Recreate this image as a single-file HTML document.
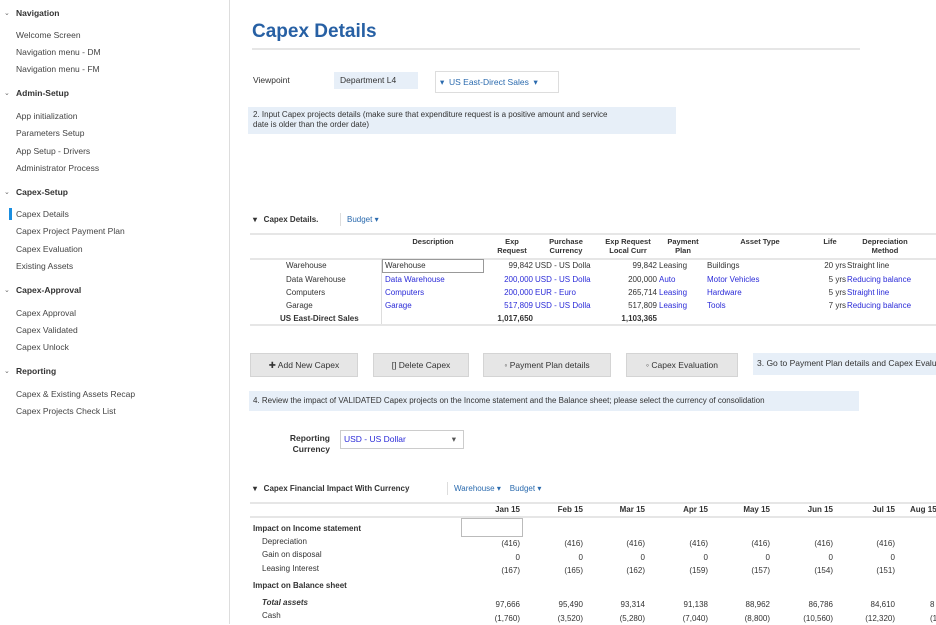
<!DOCTYPE html>
<html><head><style>
*{margin:0;padding:0;box-sizing:border-box}
body{width:936px;height:624px;overflow:hidden;background:#fff;font-family:"Liberation Sans",sans-serif;font-size:8px;color:#333;position:relative}
.a{position:absolute;white-space:nowrap}
.h{font-weight:bold;color:#333;font-size:8.5px}
.i{color:#444;font-size:8.5px}
.chev{position:absolute;left:4px;font-size:7px;color:#666}
.bl{color:#2b2bd8}
.r{text-align:right}
.btn{position:absolute;background:#e6e6e6;border:1px solid #d4d4d4;height:24px;font-size:8.5px;color:#333;display:flex;align-items:center;justify-content:center}
.box{position:absolute;background:#e7eff8}
.hr{position:absolute;height:2px;background:#e6e6e6}
</style></head><body>
<div style="position:absolute;left:229px;top:0;width:1px;height:624px;background:#ddd"></div>

<span class="chev" style="top:9px">⌄</span><div class="a h" style="left:16px;top:8px">Navigation</div>
<div class="a i" style="left:16px;top:30px">Welcome Screen</div>
<div class="a i" style="left:16px;top:47px">Navigation menu - DM</div>
<div class="a i" style="left:16px;top:64px">Navigation menu - FM</div>
<span class="chev" style="top:89px">⌄</span><div class="a h" style="left:16px;top:88px">Admin-Setup</div>
<div class="a i" style="left:16px;top:111px">App initialization</div>
<div class="a i" style="left:16px;top:128px">Parameters Setup</div>
<div class="a i" style="left:16px;top:146px">App Setup - Drivers</div>
<div class="a i" style="left:16px;top:163px">Administrator Process</div>
<span class="chev" style="top:188px">⌄</span><div class="a h" style="left:16px;top:187px">Capex-Setup</div>
<div style="position:absolute;left:9px;top:208px;width:3px;height:12px;background:#1a8ee0"></div>
<div class="a i" style="left:16px;top:209px">Capex Details</div>
<div class="a i" style="left:16px;top:226px">Capex Project Payment Plan</div>
<div class="a i" style="left:16px;top:244px">Capex Evaluation</div>
<div class="a i" style="left:16px;top:261px">Existing Assets</div>
<span class="chev" style="top:286px">⌄</span><div class="a h" style="left:16px;top:285px">Capex-Approval</div>
<div class="a i" style="left:16px;top:308px">Capex Approval</div>
<div class="a i" style="left:16px;top:325px">Capex Validated</div>
<div class="a i" style="left:16px;top:342px">Capex Unlock</div>
<span class="chev" style="top:367px">⌄</span><div class="a h" style="left:16px;top:366px">Reporting</div>
<div class="a i" style="left:16px;top:389px">Capex &amp; Existing Assets Recap</div>
<div class="a i" style="left:16px;top:406px">Capex Projects Check List</div>

<div class="a" style="left:252px;top:21px;font-size:19px;font-weight:bold;color:#2760a4">Capex Details</div>
<div class="hr" style="left:252px;top:48px;width:608px"></div>

<div class="a" style="left:253px;top:75px;font-size:8.5px">Viewpoint</div>
<div class="box" style="left:334px;top:72px;width:84px;height:17px;font-size:8.5px;padding:3px 6px">Department L4</div>
<div style="position:absolute;left:435px;top:71px;width:124px;height:22px;border:1px solid #ddd;font-size:8.5px;color:#2a6aae;padding:5px 4px">▾ &nbsp;US East-Direct Sales &nbsp;▾</div>
<div class="box" style="left:248px;top:107px;width:428px;height:27px;font-size:8px;padding:3px 5px;line-height:10px">2. Input Capex projects details (make sure that expenditure request is a positive amount and service<br>date is older than the order date)</div>

<div class="a" style="left:253px;top:215px;font-size:8px;font-weight:bold">▾ &nbsp; Capex Details.</div>
<div style="position:absolute;left:340px;top:213px;width:1px;height:13px;background:#ddd"></div>
<div class="a" style="left:347px;top:215px;color:#2a6aae">Budget ▾</div>
<div class="hr" style="left:250px;top:233px;width:686px"></div>
<div class="a" style="left:383px;top:237px;width:100px;text-align:center;font-weight:bold;font-size:7.5px">Description</div>
<div class="a r" style="left:492px;top:237px;width:40px;font-weight:bold;font-size:7.5px;text-align:center;line-height:9px">Exp<br>Request</div>
<div class="a" style="left:538px;top:237px;width:56px;font-weight:bold;font-size:7.5px;text-align:center;line-height:9px">Purchase<br>Currency</div>
<div class="a" style="left:598px;top:237px;width:60px;font-weight:bold;font-size:7.5px;text-align:center;line-height:9px">Exp Request<br>Local Curr</div>
<div class="a" style="left:660px;top:237px;width:46px;font-weight:bold;font-size:7.5px;text-align:center;line-height:9px">Payment<br>Plan</div>
<div class="a" style="left:720px;top:237px;width:80px;font-weight:bold;font-size:7.5px;text-align:center">Asset Type</div>
<div class="a" style="left:815px;top:237px;width:30px;font-weight:bold;font-size:7.5px;text-align:center">Life</div>
<div class="a" style="left:850px;top:237px;width:70px;font-weight:bold;font-size:7.5px;text-align:center;line-height:9px">Depreciation<br>Method</div>
<div class="hr" style="left:250px;top:258px;width:686px"></div>
<div style="position:absolute;left:381px;top:259px;width:1px;height:65px;background:#ddd"></div>
<div style="position:absolute;left:382px;top:259px;width:102px;height:14px;border:1px solid #999"></div>

<div class="a" style="left:286px;top:261px">Warehouse</div>
<div class="a" style="left:286px;top:275px">Data Warehouse</div>
<div class="a" style="left:286px;top:288px">Computers</div>
<div class="a" style="left:286px;top:301px">Garage</div>
<div class="a" style="left:280px;top:314px;font-weight:bold">US East-Direct Sales</div>
<div class="a" style="left:385px;top:261px">Warehouse</div>
<div class="a bl" style="left:385px;top:275px">Data Warehouse</div>
<div class="a bl" style="left:385px;top:288px">Computers</div>
<div class="a bl" style="left:385px;top:301px">Garage</div>
<div class="a r" style="left:480px;top:261px;width:53px">99,842</div>
<div class="a r bl" style="left:480px;top:275px;width:53px">200,000</div>
<div class="a r bl" style="left:480px;top:288px;width:53px">200,000</div>
<div class="a r bl" style="left:480px;top:301px;width:53px">517,809</div>
<div class="a r" style="left:480px;top:314px;width:53px;font-weight:bold">1,017,650</div>
<div class="a" style="left:535px;top:261px">USD - US Dolla</div>
<div class="a bl" style="left:535px;top:275px">USD - US Dolla</div>
<div class="a bl" style="left:535px;top:288px">EUR - Euro</div>
<div class="a bl" style="left:535px;top:301px">USD - US Dolla</div>
<div class="a r" style="left:600px;top:261px;width:57px">99,842</div>
<div class="a r" style="left:600px;top:275px;width:57px">200,000</div>
<div class="a r" style="left:600px;top:288px;width:57px">265,714</div>
<div class="a r" style="left:600px;top:301px;width:57px">517,809</div>
<div class="a r" style="left:600px;top:314px;width:57px;font-weight:bold">1,103,365</div>
<div class="a" style="left:659px;top:261px">Leasing</div>
<div class="a bl" style="left:659px;top:275px">Auto</div>
<div class="a bl" style="left:659px;top:288px">Leasing</div>
<div class="a bl" style="left:659px;top:301px">Leasing</div>
<div class="a" style="left:707px;top:261px">Buildings</div>
<div class="a bl" style="left:707px;top:275px">Motor Vehicles</div>
<div class="a bl" style="left:707px;top:288px">Hardware</div>
<div class="a bl" style="left:707px;top:301px">Tools</div>
<div class="a r" style="left:810px;top:261px;width:36px">20 yrs</div>
<div class="a r" style="left:810px;top:275px;width:36px">5 yrs</div>
<div class="a r" style="left:810px;top:288px;width:36px">5 yrs</div>
<div class="a r" style="left:810px;top:301px;width:36px">7 yrs</div>
<div class="a" style="left:847px;top:261px">Straight line</div>
<div class="a bl" style="left:847px;top:275px">Reducing balance</div>
<div class="a bl" style="left:847px;top:288px">Straight line</div>
<div class="a bl" style="left:847px;top:301px">Reducing balance</div>
<div class="hr" style="left:250px;top:324px;width:686px"></div>

<div class="btn" style="left:250px;top:353px;width:108px">✚ Add New Capex</div>
<div class="btn" style="left:373px;top:353px;width:96px">[] Delete Capex</div>
<div class="btn" style="left:483px;top:353px;width:128px">◦ Payment Plan details</div>
<div class="btn" style="left:626px;top:353px;width:112px">◦ Capex Evaluation</div>
<div class="box" style="left:753px;top:353px;width:183px;height:22px;font-size:8.5px;padding:5px 4px;overflow:hidden;white-space:nowrap">3. Go to Payment Plan details and Capex Evaluation</div>
<div class="box" style="left:249px;top:391px;width:610px;height:20px;font-size:8px;padding:5px 4px">4. Review the impact of VALIDATED Capex projects on the Income statement and the Balance sheet; please select the currency of consolidation</div>

<div class="a r" style="left:270px;top:433px;width:60px;font-weight:bold;font-size:8.5px;line-height:11px">Reporting<br>Currency</div>
<div style="position:absolute;left:340px;top:430px;width:124px;height:19px;border:1px solid #ccc;font-size:8.5px;color:#2b2bd8;padding:3px 3px">USD - US Dollar<span style="position:absolute;right:7px;color:#555">▾</span></div>

<div class="a" style="left:253px;top:484px;font-size:8px;font-weight:bold">▾ &nbsp; Capex Financial Impact With Currency</div>
<div style="position:absolute;left:447px;top:482px;width:1px;height:13px;background:#ddd"></div>
<div class="a" style="left:454px;top:484px;color:#2a6aae">Warehouse ▾ &nbsp;&nbsp; Budget ▾</div>
<div class="hr" style="left:250px;top:502px;width:686px"></div>
<div class="hr" style="left:250px;top:516px;width:686px"></div>
<div style="position:absolute;left:461px;top:518px;width:62px;height:19px;border:1px solid #bbb"></div>
<div class="a" style="left:253px;top:524px;font-weight:bold">Impact on Income statement</div>
<div class="a" style="left:262px;top:537px">Depreciation</div>
<div class="a" style="left:262px;top:550px">Gain on disposal</div>
<div class="a" style="left:262px;top:564px">Leasing Interest</div>
<div class="a" style="left:253px;top:581px;font-weight:bold">Impact on Balance sheet</div>
<div class="a" style="left:262px;top:598px;font-weight:bold;font-style:italic">Total assets</div>
<div class="a" style="left:262px;top:611px">Cash</div>

<div style="position:absolute;left:460px;top:505px">
<div class="a r" style="left:0;top:0;width:60px;font-weight:bold">Jan 15</div>
<div class="a r" style="left:63px;top:0;width:60px;font-weight:bold">Feb 15</div>
<div class="a r" style="left:125px;top:0;width:60px;font-weight:bold">Mar 15</div>
<div class="a r" style="left:188px;top:0;width:60px;font-weight:bold">Apr 15</div>
<div class="a r" style="left:250px;top:0;width:60px;font-weight:bold">May 15</div>
<div class="a r" style="left:313px;top:0;width:60px;font-weight:bold">Jun 15</div>
<div class="a r" style="left:375px;top:0;width:60px;font-weight:bold">Jul 15</div>
<div class="a" style="left:450px;top:0;font-weight:bold">Aug 15</div>
</div>
<div style="position:absolute;left:460px;top:537px;line-height:13.5px">
<div class="a r" style="left:0;width:60px">(416)<br>0<br>(167)</div>
<div class="a r" style="left:63px;width:60px">(416)<br>0<br>(165)</div>
<div class="a r" style="left:125px;width:60px">(416)<br>0<br>(162)</div>
<div class="a r" style="left:188px;width:60px">(416)<br>0<br>(159)</div>
<div class="a r" style="left:250px;width:60px">(416)<br>0<br>(157)</div>
<div class="a r" style="left:313px;width:60px">(416)<br>0<br>(154)</div>
<div class="a r" style="left:375px;width:60px">(416)<br>0<br>(151)</div>
</div>
<div style="position:absolute;left:460px;top:598px;line-height:13.5px">
<div class="a r" style="left:0;width:60px">97,666<br>(1,760)</div>
<div class="a r" style="left:63px;width:60px">95,490<br>(3,520)</div>
<div class="a r" style="left:125px;width:60px">93,314<br>(5,280)</div>
<div class="a r" style="left:188px;width:60px">91,138<br>(7,040)</div>
<div class="a r" style="left:250px;width:60px">88,962<br>(8,800)</div>
<div class="a r" style="left:313px;width:60px">86,786<br>(10,560)</div>
<div class="a r" style="left:375px;width:60px">84,610<br>(12,320)</div>
<div class="a" style="left:470px">8<br>(1</div>
</div>
</body></html>
